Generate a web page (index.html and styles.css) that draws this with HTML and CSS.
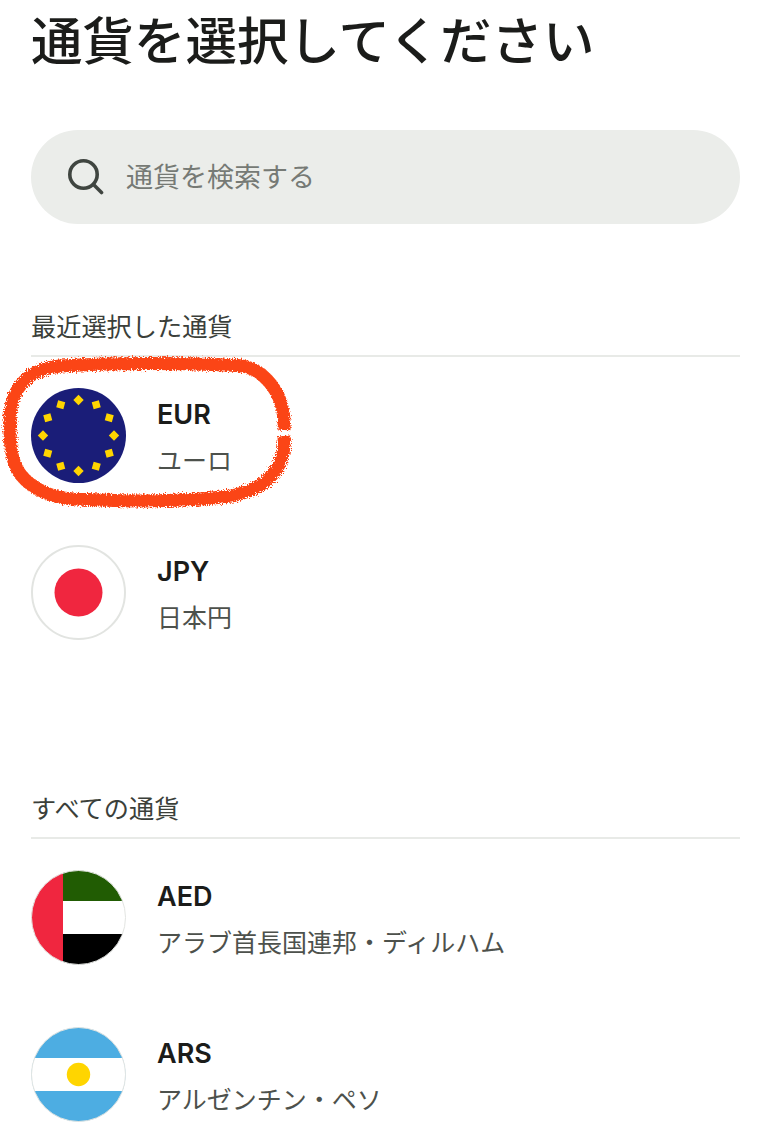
FILE: index.html
```html
<!DOCTYPE html>
<html lang="ja">
<head>
<meta charset="utf-8">
<title>通貨を選択してください</title>
<link rel="stylesheet" href="styles.css">
</head>
<body>
<main class="page">
  <h1 class="title">通貨を選択してください</h1>
  <div class="search">
    <svg class="search-icon" viewBox="0 0 36 36" fill="none" stroke="#3f4540" stroke-width="3.6" stroke-linecap="round"><circle cx="15.500" cy="15.500" r="13.700"/><path d="M25.500 25.500l8 8"/></svg>
    <span class="placeholder">通貨を検索する</span>
  </div>

  <section class="section recent">
    <h2 class="section-title">最近選択した通貨</h2>
    <div class="row">
      <svg class="flag" viewBox="0 0 95 95">
        <defs><path id="star" d="M47.500 6.800l5.200 5.200-5.200 5.200-5.200-5.200z" fill="#ffd500"/></defs>
        <circle cx="47.500" cy="47.500" r="47.500" fill="#1a1d78"/>
        <use href="#star"/>
        <use href="#star" transform="rotate(30 47.500 47.500)"/>
        <use href="#star" transform="rotate(60 47.500 47.500)"/>
        <use href="#star" transform="rotate(90 47.500 47.500)"/>
        <use href="#star" transform="rotate(120 47.500 47.500)"/>
        <use href="#star" transform="rotate(150 47.500 47.500)"/>
        <use href="#star" transform="rotate(180 47.500 47.500)"/>
        <use href="#star" transform="rotate(210 47.500 47.500)"/>
        <use href="#star" transform="rotate(240 47.500 47.500)"/>
        <use href="#star" transform="rotate(270 47.500 47.500)"/>
        <use href="#star" transform="rotate(300 47.500 47.500)"/>
        <use href="#star" transform="rotate(330 47.500 47.500)"/>
      </svg>
      <div class="info"><div class="code">EUR</div><div class="name">ユーロ</div></div>
    </div>
    <div class="row">
      <svg class="flag" viewBox="0 0 95 95">
        <circle cx="47.500" cy="47.500" r="46.500" fill="#fff" stroke="#e2e4e1" stroke-width="2"/>
        <circle cx="47.500" cy="47.500" r="24" fill="#f0263f"/>
      </svg>
      <div class="info"><div class="code">JPY</div><div class="name">日本円</div></div>
    </div>
    <svg class="scribble" viewBox="0 0 300 170" fill="none">
      <defs>
        <filter id="rough" x="-5%" y="-10%" width="110%" height="120%">
          <feTurbulence type="fractalNoise" baseFrequency="0.8" numOctaves="2" seed="4"/>
          <feDisplacementMap in="SourceGraphic" scale="7"/>
        </filter>
      </defs>
      <path filter="url(#rough)" stroke="#fb4516" stroke-width="13" stroke-linecap="butt" d="M284 80C285 60 280 40 262 25C252 17 244 15 225 15C170 13 110 13 60 16C30 19 11 36 10 68C9 105 12 128 44 142C60 150 78 149 100 150C150 152 190 151 232 146C268 138 286 118 284 86"/>
    </svg>
  </section>

  <section class="section all">
    <h2 class="section-title">すべての通貨</h2>
    <div class="row">
      <svg class="flag" viewBox="0 0 95 95">
        <defs><clipPath id="c1"><circle cx="47.500" cy="47.500" r="47"/></clipPath></defs>
        <g clip-path="url(#c1)">
          <rect x="32" y="0" width="63" height="31" fill="#215c03"/>
          <rect x="32" y="31" width="63" height="33" fill="#fff"/>
          <rect x="32" y="64" width="63" height="31" fill="#000"/>
          <rect x="0" y="0" width="32" height="95" fill="#f0263f"/>
        </g>
        <circle cx="47.500" cy="47.500" r="47" fill="none" stroke="#e2e4e1" stroke-width="1"/>
      </svg>
      <div class="info"><div class="code">AED</div><div class="name">アラブ首長国連邦・ディルハム</div></div>
    </div>
    <div class="row">
      <svg class="flag" viewBox="0 0 95 95">
        <defs><clipPath id="c2"><circle cx="47.500" cy="47.500" r="47"/></clipPath></defs>
        <g clip-path="url(#c2)">
          <rect width="95" height="95" fill="#4dade2"/>
          <rect y="31" width="95" height="33" fill="#fff"/>
        </g>
        <circle cx="47.500" cy="47.500" r="47" fill="none" stroke="#e2e4e1" stroke-width="1"/>
        <circle cx="47.500" cy="47.500" r="11.700" fill="#ffd500"/>
      </svg>
      <div class="info"><div class="code">ARS</div><div class="name">アルゼンチン・ペソ</div></div>
    </div>
  </section>
</main>
</body>
</html>
```

FILE: styles.css
```css
* { box-sizing: border-box; }
html, body { margin: 0; height: 100%; background: #fff; overflow: hidden; }
body { font-family: Inter, "Noto Sans CJK JP", sans-serif; color: #1b1c1a; }
.page { padding: 0 31px; }
.title { margin: 0; height: 130px; padding-top: 7px; font-size: 51.5px; line-height: 68px; font-weight: 500; color: #1b1c1a; }
.search { height: 94px; border-radius: 47px; background: #ebedea; display: flex; align-items: center; padding-left: 37px; gap: 22px; }
.search-icon { width: 36px; height: 36px; flex: none; }
.placeholder { font-size: 27px; color: #767a75; line-height: 1; }
.section { position: relative; }
.recent { margin-top: 87px; }
.all { margin-top: 122px; }
.section-title { margin: 0; height: 46px; border-bottom: 2px solid #e8eae7; font-size: 25.2px; font-weight: 400; line-height: 32px; color: #3b3f3a; }
.row { height: 157px; display: flex; align-items: center; gap: 31px; }
.flag { width: 95px; height: 95px; flex: none; display: block; }
.info { display: flex; flex-direction: column; gap: 12px; padding-top: 5px; }
.code { font-size: 27px; line-height: 34px; font-weight: 600; }
.name { font-size: 25px; line-height: 34px; color: #4d514c; }
.scribble { position: absolute; left: -31px; top: 39px; width: 300px; height: 170px; pointer-events: none; }
```
